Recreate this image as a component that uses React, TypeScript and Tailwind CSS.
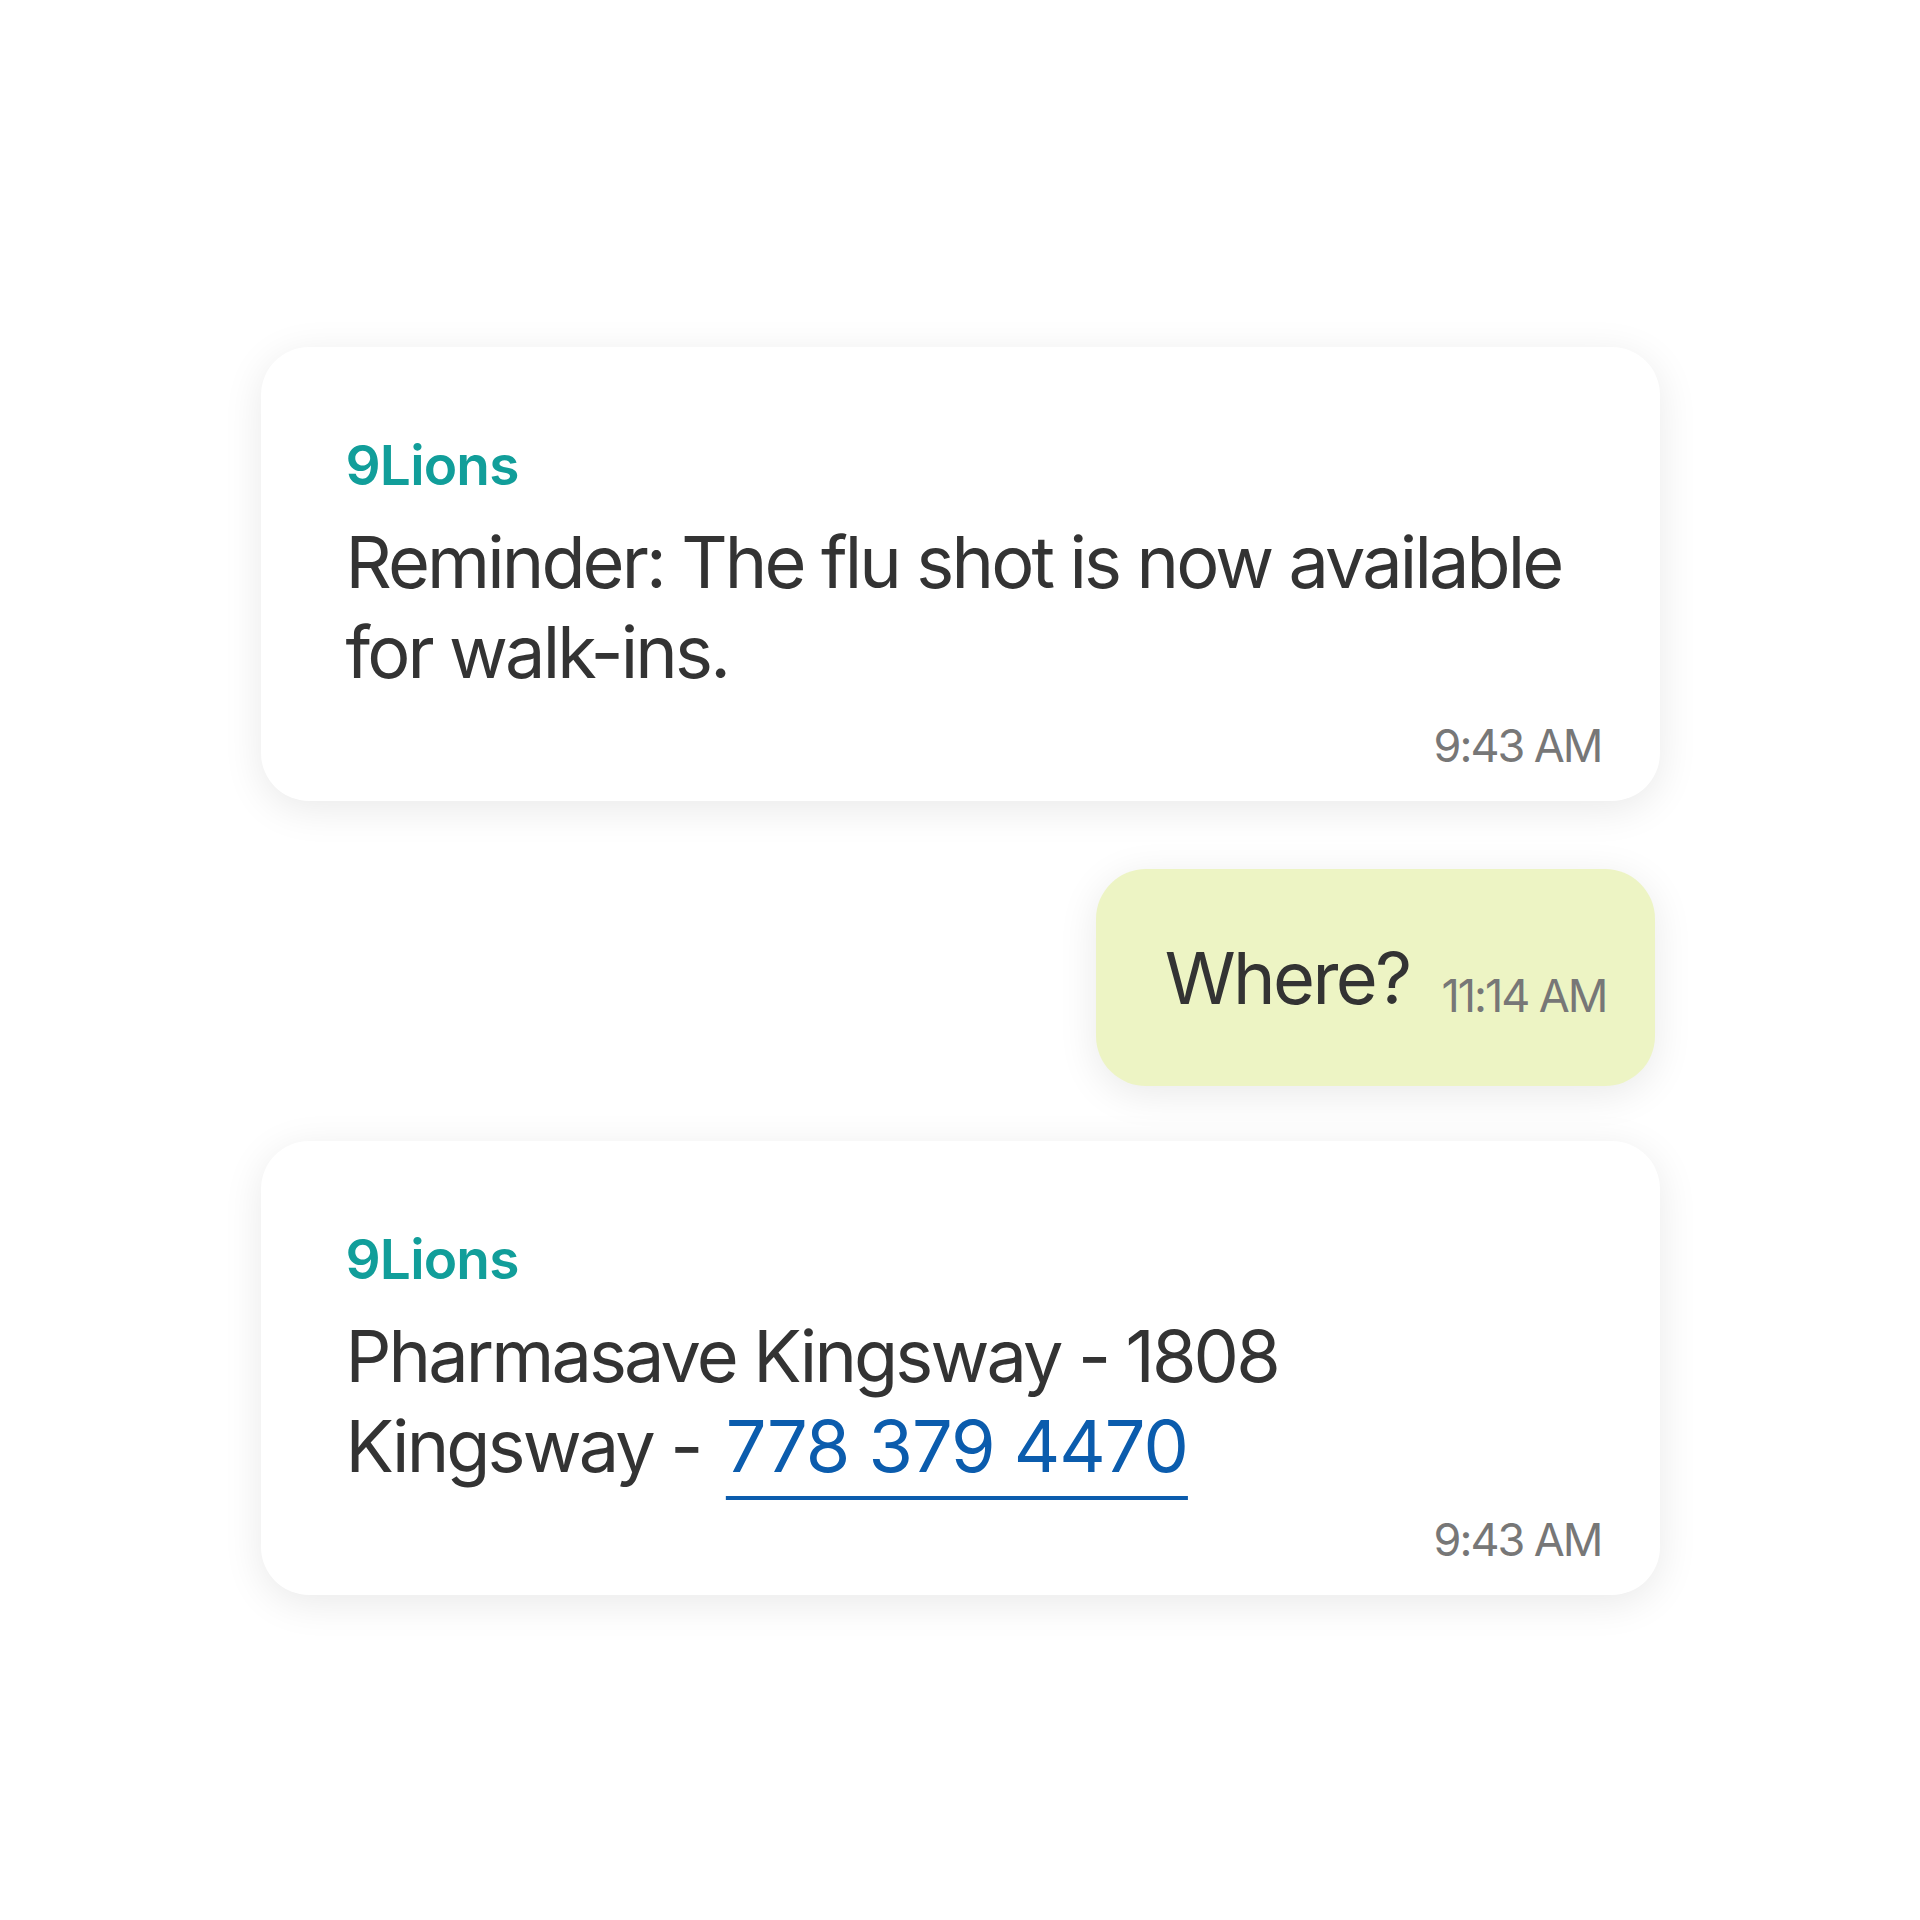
type Incoming = {
  sender: string;
  time: string;
  body: React.ReactNode;
};

function IncomingCard({ sender, time, body }: Incoming) {
  return (
    <div className="rounded-[48px] bg-white px-[85px] pt-[85px] pb-[28px] shadow-[0_8px_40px_rgba(0,0,0,0.09)]">
      <div className="text-[55px] leading-[66px] font-semibold tracking-[-0.015em] text-[#119e9a]">{sender}</div>
      <div className="mt-[19px] text-[72px] leading-[90px] tracking-[-0.04em] text-[#333333]">{body}</div>
      <div className="mt-[22px] -mr-[27px] text-right text-[45px] leading-[54px] tracking-[-0.045em] text-[#777777]">
        {time}
      </div>
    </div>
  );
}

function OutgoingBubble({ text, time }: { text: string; time: string }) {
  return (
    <div className="mr-[5px] flex justify-end">
      <div className="flex items-end gap-[32px] rounded-[50px] bg-[#edf4c4] pl-[69px] pr-[48px] pt-[64px] pb-[63px] shadow-[0_8px_40px_rgba(0,0,0,0.09)]">
        <span className="text-[72px] leading-[90px] tracking-[-0.036em] text-[#333333]">{text}</span>
        <span className="text-[45px] leading-[54px] tracking-[-0.045em] text-[#777777]">{time}</span>
      </div>
    </div>
  );
}

export default function App() {
  return (
    <div className="min-h-screen bg-white pt-[347px] font-['Inter',sans-serif]">
      <div className="mx-auto w-[1399px]">
        <IncomingCard
          sender="9Lions"
          time="9:43 AM"
          body="Reminder: The flu shot is now available for walk-ins."
        />
        <div className="mt-[68px]">
          <OutgoingBubble text="Where?" time="11:14 AM" />
        </div>
        <div className="mt-[55px]">
          <IncomingCard
            sender="9Lions"
            time="9:43 AM"
            body={
              <>
                Pharmasave Kingsway - 1808 Kingsway -{" "}
                <a
                  href="#"
                  className="ml-[8px] tracking-[-0.014em] text-[#0b5cad] underline decoration-[4px] underline-offset-[24px]"
                >
                  778 379 4470
                </a>
              </>
            }
          />
        </div>
      </div>
    </div>
  );
}
